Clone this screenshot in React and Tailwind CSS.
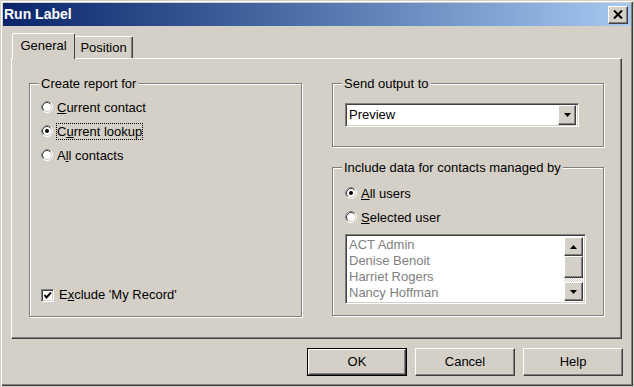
import React from 'react'

const raised =
  'border border-t-white border-l-white border-r-[#404040] border-b-[#404040] shadow-[inset_-1px_-1px_0_#808080]'
const sunken =
  'border border-t-[#808080] border-l-[#808080] border-r-white border-b-white shadow-[inset_1px_1px_0_#404040,inset_-1px_-1px_0_#d4d0c8]'

function Radio({ checked }) {
  return (
    <svg width="12" height="12" viewBox="0 0 12 12" className="shrink-0">
      <circle cx="6" cy="6" r="5.5" fill="none" stroke="#ffffff" />
      <path d="M2.11 9.89 A5.5 5.5 0 0 1 9.89 2.11" fill="none" stroke="#808080" />
      <circle cx="6" cy="6" r="4.5" fill="#ffffff" stroke="#d4d0c8" />
      <path d="M2.82 9.18 A4.5 4.5 0 0 1 9.18 2.82" fill="none" stroke="#404040" />
      {checked && <circle cx="6" cy="6" r="2" fill="#000000" />}
    </svg>
  )
}

function RadioRow({ checked, focus, children }) {
  return (
    <div className="flex h-[24px] items-center gap-[3px]">
      <Radio checked={checked} />
      <span
        className={`border px-0 leading-[15px] ${focus ? 'border-dotted border-black' : 'border-transparent'}`}
      >
        {children}
      </span>
    </div>
  )
}

function GroupBox({ label, className, children }) {
  return (
    <div
      className={`relative border border-[#808080] shadow-[inset_1px_1px_0_#fff,1px_1px_0_#fff] ${className}`}
    >
      <span className="absolute -top-[8px] left-[9px] bg-[#d4d0c8] px-[2px] leading-[15px]">
        {label}
      </span>
      {children}
    </div>
  )
}

function Arrow({ up }) {
  return (
    <svg width="7" height="4" viewBox="0 0 7 4">
      <path d={up ? 'M3.5 0 L7 4 L0 4 Z' : 'M0 0 L7 0 L3.5 4 Z'} fill="#000" />
    </svg>
  )
}

function Button({ children, isDefault }) {
  return (
    <div className={`h-[28px] w-[100px] ${isDefault ? 'border border-black' : ''}`}>
      <div className={`flex h-full w-full items-center justify-center ${raised}`}>{children}</div>
    </div>
  )
}

export default function App() {
  const users = ['ACT Admin', 'Denise Benoit', 'Harriet Rogers', 'Nancy Hoffman', 'Shannon Smith']

  return (
    <div
      className="flex h-[387px] w-[634px] flex-col bg-[#d4d0c8] p-[2px] text-[13px] text-black shadow-[inset_1px_1px_0_#fff,inset_-1px_-1px_0_#404040,inset_-2px_-2px_0_#808080] border border-[#d4d0c8]"
      style={{ fontFamily: '"Liberation Sans", Arial, sans-serif' }}
    >
      {/* title bar */}
      <div className="flex h-[23px] items-center justify-between bg-gradient-to-r from-[#0a246a] to-[#a6caf0] pl-[1px] pr-[3px]">
        <span className="text-[14px] font-bold text-white">Run Label</span>
        <div className={`flex h-[18px] w-[20px] items-center justify-center bg-[#d4d0c8] ${raised}`}>
          <svg width="10" height="9" viewBox="0 0 10 9">
            <path d="M1 0.5 L9 8.5 M9 0.5 L1 8.5" stroke="#000" strokeWidth="2" />
          </svg>
        </div>
      </div>

      <div className="flex flex-1 flex-col pl-[8px] pr-[8px] pt-[7px]">
        {/* tabs */}
        <div className="flex h-[25px] items-start pl-[1px]">
          <div className="relative z-10 flex h-[26px] w-[63px] items-center justify-center rounded-t-[2px] border-l border-t border-r border-l-white border-t-white border-r-[#404040] bg-[#d4d0c8] pb-[2px]">
            General
          </div>
          <div className="mt-[3px] flex h-[22px] w-[58px] items-center justify-center rounded-t-[2px] border-t border-r border-t-white border-r-[#404040] shadow-[inset_-1px_0_0_#808080]">
            Position
          </div>
        </div>

        {/* panel */}
        <div className="flex h-[281px] w-[611px] gap-[30px] border border-t-white border-l-white border-r-[#404040] border-b-[#404040] pl-[17px] pt-[24px] shadow-[inset_-1px_-1px_0_#808080]">
          <GroupBox label="Create report for" className="flex h-[234px] w-[273px] flex-col pl-[11px] pt-[11px] pb-[9px]">
            <RadioRow>
              <u>C</u>urrent contact
            </RadioRow>
            <RadioRow checked focus>
              C<u>u</u>rrent lookup
            </RadioRow>
            <RadioRow>
              A<u>l</u>l contacts
            </RadioRow>
            <div className="mt-auto flex h-[24px] items-center gap-[5px]">
              <div className={`flex h-[13px] w-[13px] items-center justify-center bg-white ${sunken}`}>
                <svg width="9" height="9" viewBox="0 0 9 9">
                  <path d="M1.5 4 L3.5 6.5 L8 1.5" fill="none" stroke="#000" strokeWidth="2" />
                </svg>
              </div>
              <span>
                E<u>x</u>clude 'My Record'
              </span>
            </div>
          </GroupBox>

          <div className="flex w-[272px] flex-col gap-[20px]">
            <GroupBox label="Send output to" className="h-[64px] pl-[12px] pt-[19px]">
              <div className={`flex h-[24px] w-[234px] items-center bg-white pl-[3px] pr-[2px] ${sunken}`}>
                <span className="flex-1">Preview</span>
                <div className={`flex h-[20px] w-[18px] items-center justify-center bg-[#d4d0c8] ${raised}`}>
                  <Arrow />
                </div>
              </div>
            </GroupBox>

            <GroupBox label="Include data for contacts managed by" className="flex h-[149px] flex-col pl-[12px] pt-[13px]">
              <RadioRow checked>
                <u>A</u>ll users
              </RadioRow>
              <RadioRow>
                <u>S</u>elected user
              </RadioRow>
              <div className={`mt-[5px] flex h-[70px] w-[241px] bg-white p-[2px] ${sunken}`}>
                <div className="flex-1 overflow-hidden pl-[1px] leading-[16px] text-[#808080]">
                  {users.map((u) => (
                    <div key={u}>{u}</div>
                  ))}
                </div>
                <div className="flex w-[19px] flex-col">
                  <div className={`flex h-[19px] items-center justify-center bg-[#d4d0c8] ${raised}`}>
                    <Arrow up />
                  </div>
                  <div className={`h-[22px] bg-[#d4d0c8] ${raised}`} />
                  <div className="flex-1 bg-[repeating-conic-gradient(#ffffff_0%_25%,#d4d0c8_0%_50%)] bg-[length:2px_2px]" />
                  <div className={`flex h-[19px] items-center justify-center bg-[#d4d0c8] ${raised}`}>
                    <Arrow />
                  </div>
                </div>
              </div>
            </GroupBox>
          </div>
        </div>

        {/* buttons */}
        <div className="mt-[9px] flex justify-end gap-[8px] pr-[0px]">
          <Button isDefault>OK</Button>
          <Button>Cancel</Button>
          <Button>Help</Button>
        </div>
      </div>
    </div>
  )
}
